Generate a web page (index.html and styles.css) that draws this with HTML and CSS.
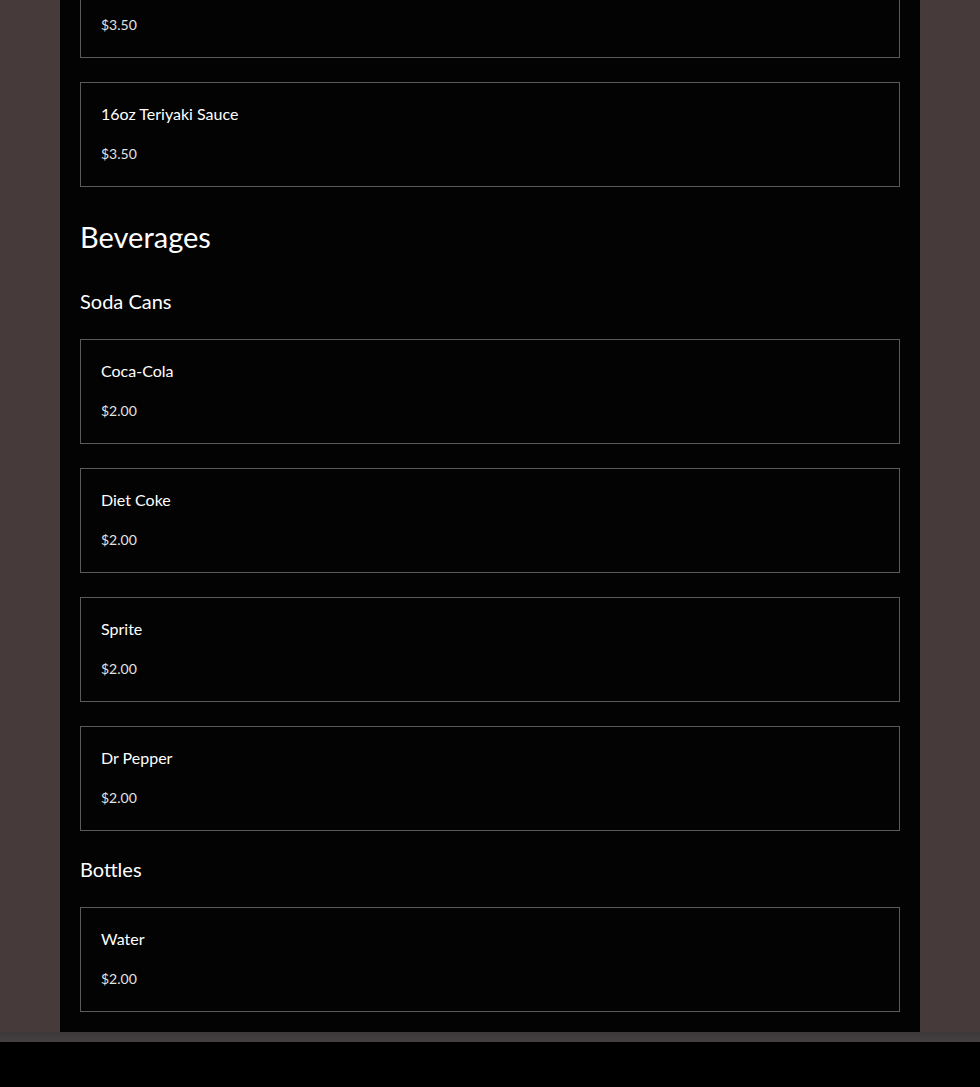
FILE: index.html
```html
<!DOCTYPE html>
<html lang="en">
<head>
    <meta charset="UTF-8">
    <meta name="viewport" content="width=device-width, initial-scale=1.0">
    <title>Menu</title>
    <link rel="stylesheet" href="styles.css">
</head>
<body>
    <div class="page">
        <main class="menu">
            <div class="item">
                <div class="item-name">8oz Teriyaki Sauce</div>
                <div class="item-price">$3.50</div>
            </div>
            <div class="item">
                <div class="item-name">16oz Teriyaki Sauce</div>
                <div class="item-price">$3.50</div>
            </div>

            <h2 class="section-title">Beverages</h2>

            <h3 class="group-title">Soda Cans</h3>
            <div class="item">
                <div class="item-name">Coca-Cola</div>
                <div class="item-price">$2.00</div>
            </div>
            <div class="item">
                <div class="item-name">Diet Coke</div>
                <div class="item-price">$2.00</div>
            </div>
            <div class="item">
                <div class="item-name">Sprite</div>
                <div class="item-price">$2.00</div>
            </div>
            <div class="item">
                <div class="item-name">Dr Pepper</div>
                <div class="item-price">$2.00</div>
            </div>

            <h3 class="group-title group-title-next">Bottles</h3>
            <div class="item">
                <div class="item-name">Water</div>
                <div class="item-price">$2.00</div>
            </div>
        </main>
        <div class="shade"></div>
    </div>
    <footer class="footer"></footer>
</body>
</html>
```

FILE: styles.css
```css
body {
    font-family: Lato, "Noto Sans", sans-serif;
    background-color: #000;
    margin: 0;
    padding: 0;
    color: #fff;
}

.page {
    background-color: #463a3b;
    padding: 0 60px;
}

.menu {
    background-color: #030303;
    margin-top: -47px;
    padding: 0 20px 20px;
    display: flex;
    flex-direction: column;
    gap: 24px;
}

.shade {
    height: 10px;
    background: linear-gradient(to bottom, #3a3838, #454042);
    margin: 0 -60px;
}

.item {
    border: 1px solid #5a5a5a;
    padding: 21px 20px 23px;
    display: flex;
    flex-direction: column;
    gap: 21px;
}

.item-name {
    font-size: 16px;
    line-height: 20px;
    color: #fff;
}

.item-price {
    font-size: 14px;
    line-height: 18px;
    color: #e2e2e2;
}

.section-title {
    font-size: 29px;
    line-height: 34px;
    font-weight: normal;
    margin: 9px 0 10px;
}

.group-title {
    font-size: 20px;
    line-height: 26px;
    font-weight: normal;
    margin: 0 0 1px;
}

.group-title-next {
    margin-top: 1px;
}

.footer {
    height: 60px;
    background-color: #000;
}
```
